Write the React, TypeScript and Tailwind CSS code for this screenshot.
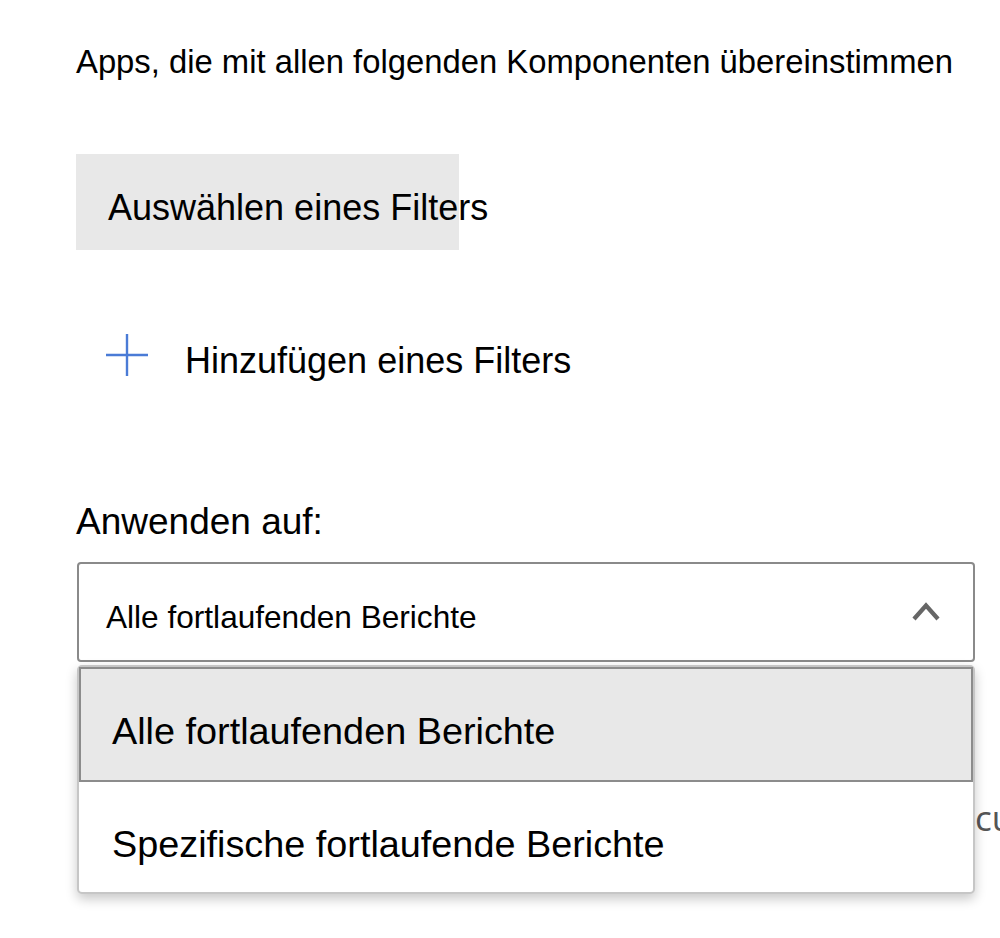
import React from "react";

export default function App() {
  return (
    <div
      className="relative w-[1000px] h-[938px] overflow-hidden bg-white text-black"
      style={{ fontFamily: '"Liberation Sans", Arial, sans-serif' }}
    >
      <div
        className="absolute left-[975px] top-[800px] z-0 whitespace-nowrap text-[35px] leading-none text-[#555]"
        style={{ fontFamily: '"Open Sans", sans-serif' }}
      >
        cu
      </div>
      <div className="relative z-10 flex flex-col pl-[76px] pt-[46px]">
        <div className="whitespace-nowrap text-[32.8px] leading-none">
          Apps, die mit allen folgenden Komponenten übereinstimmen
        </div>

        <div className="mt-[75px] h-[96px] w-[383px] bg-[#e8e8e8] pl-[32px] pt-[36px]">
          <div className="whitespace-nowrap text-[36px] leading-none">
            Auswählen eines Filters
          </div>
        </div>

        <div className="mt-[84px] flex h-[44px] items-start pl-[30px]">
          <svg width="42" height="42" viewBox="0 0 42 42" className="shrink-0">
            <line x1="0" y1="21" x2="42" y2="21" stroke="#4a7bd6" strokeWidth="2.4" />
            <line x1="21" y1="0" x2="21" y2="42" stroke="#4a7bd6" strokeWidth="2.4" />
          </svg>
          <div className="ml-[37px] mt-[9px] whitespace-nowrap text-[36px] leading-none">
            Hinzufügen eines Filters
          </div>
        </div>

        <div className="mt-[125px] whitespace-nowrap text-[37px] leading-none">
          Anwenden auf:
        </div>

        <div className="ml-px mt-[22px] flex h-[100px] w-[898px] items-start justify-between rounded-[4px] border-2 border-[#8a8a8a] bg-white pl-[27px] pr-[32px]">
          <div className="mt-[38px] whitespace-nowrap text-[31.6px] leading-none">
            Alle fortlaufenden Berichte
          </div>
          <svg width="30" height="22" viewBox="0 0 30 22" className="mt-[37px] shrink-0">
            <polyline
              points="3,18 15,4.5 27,18"
              fill="none"
              stroke="#666"
              strokeWidth="4.2"
            />
          </svg>
        </div>

        <div className="ml-px mt-[3px] flex w-[898px] flex-col rounded-[5px] border-2 border-[#c6c6c6] bg-white shadow-[0_5px_12px_rgba(0,0,0,0.22)]">
          <div className="h-[115px] border-2 border-[#8c8c8c] bg-[#e8e8e8] pl-[31px] pt-[44px]">
            <div className="whitespace-nowrap text-[37.8px] leading-none">
              Alle fortlaufenden Berichte
            </div>
          </div>
          <div className="h-[110px] pl-[33px] pt-[44px]">
            <div className="whitespace-nowrap text-[37.8px] leading-none">
              Spezifische fortlaufende Berichte
            </div>
          </div>
        </div>
      </div>
    </div>
  );
}
